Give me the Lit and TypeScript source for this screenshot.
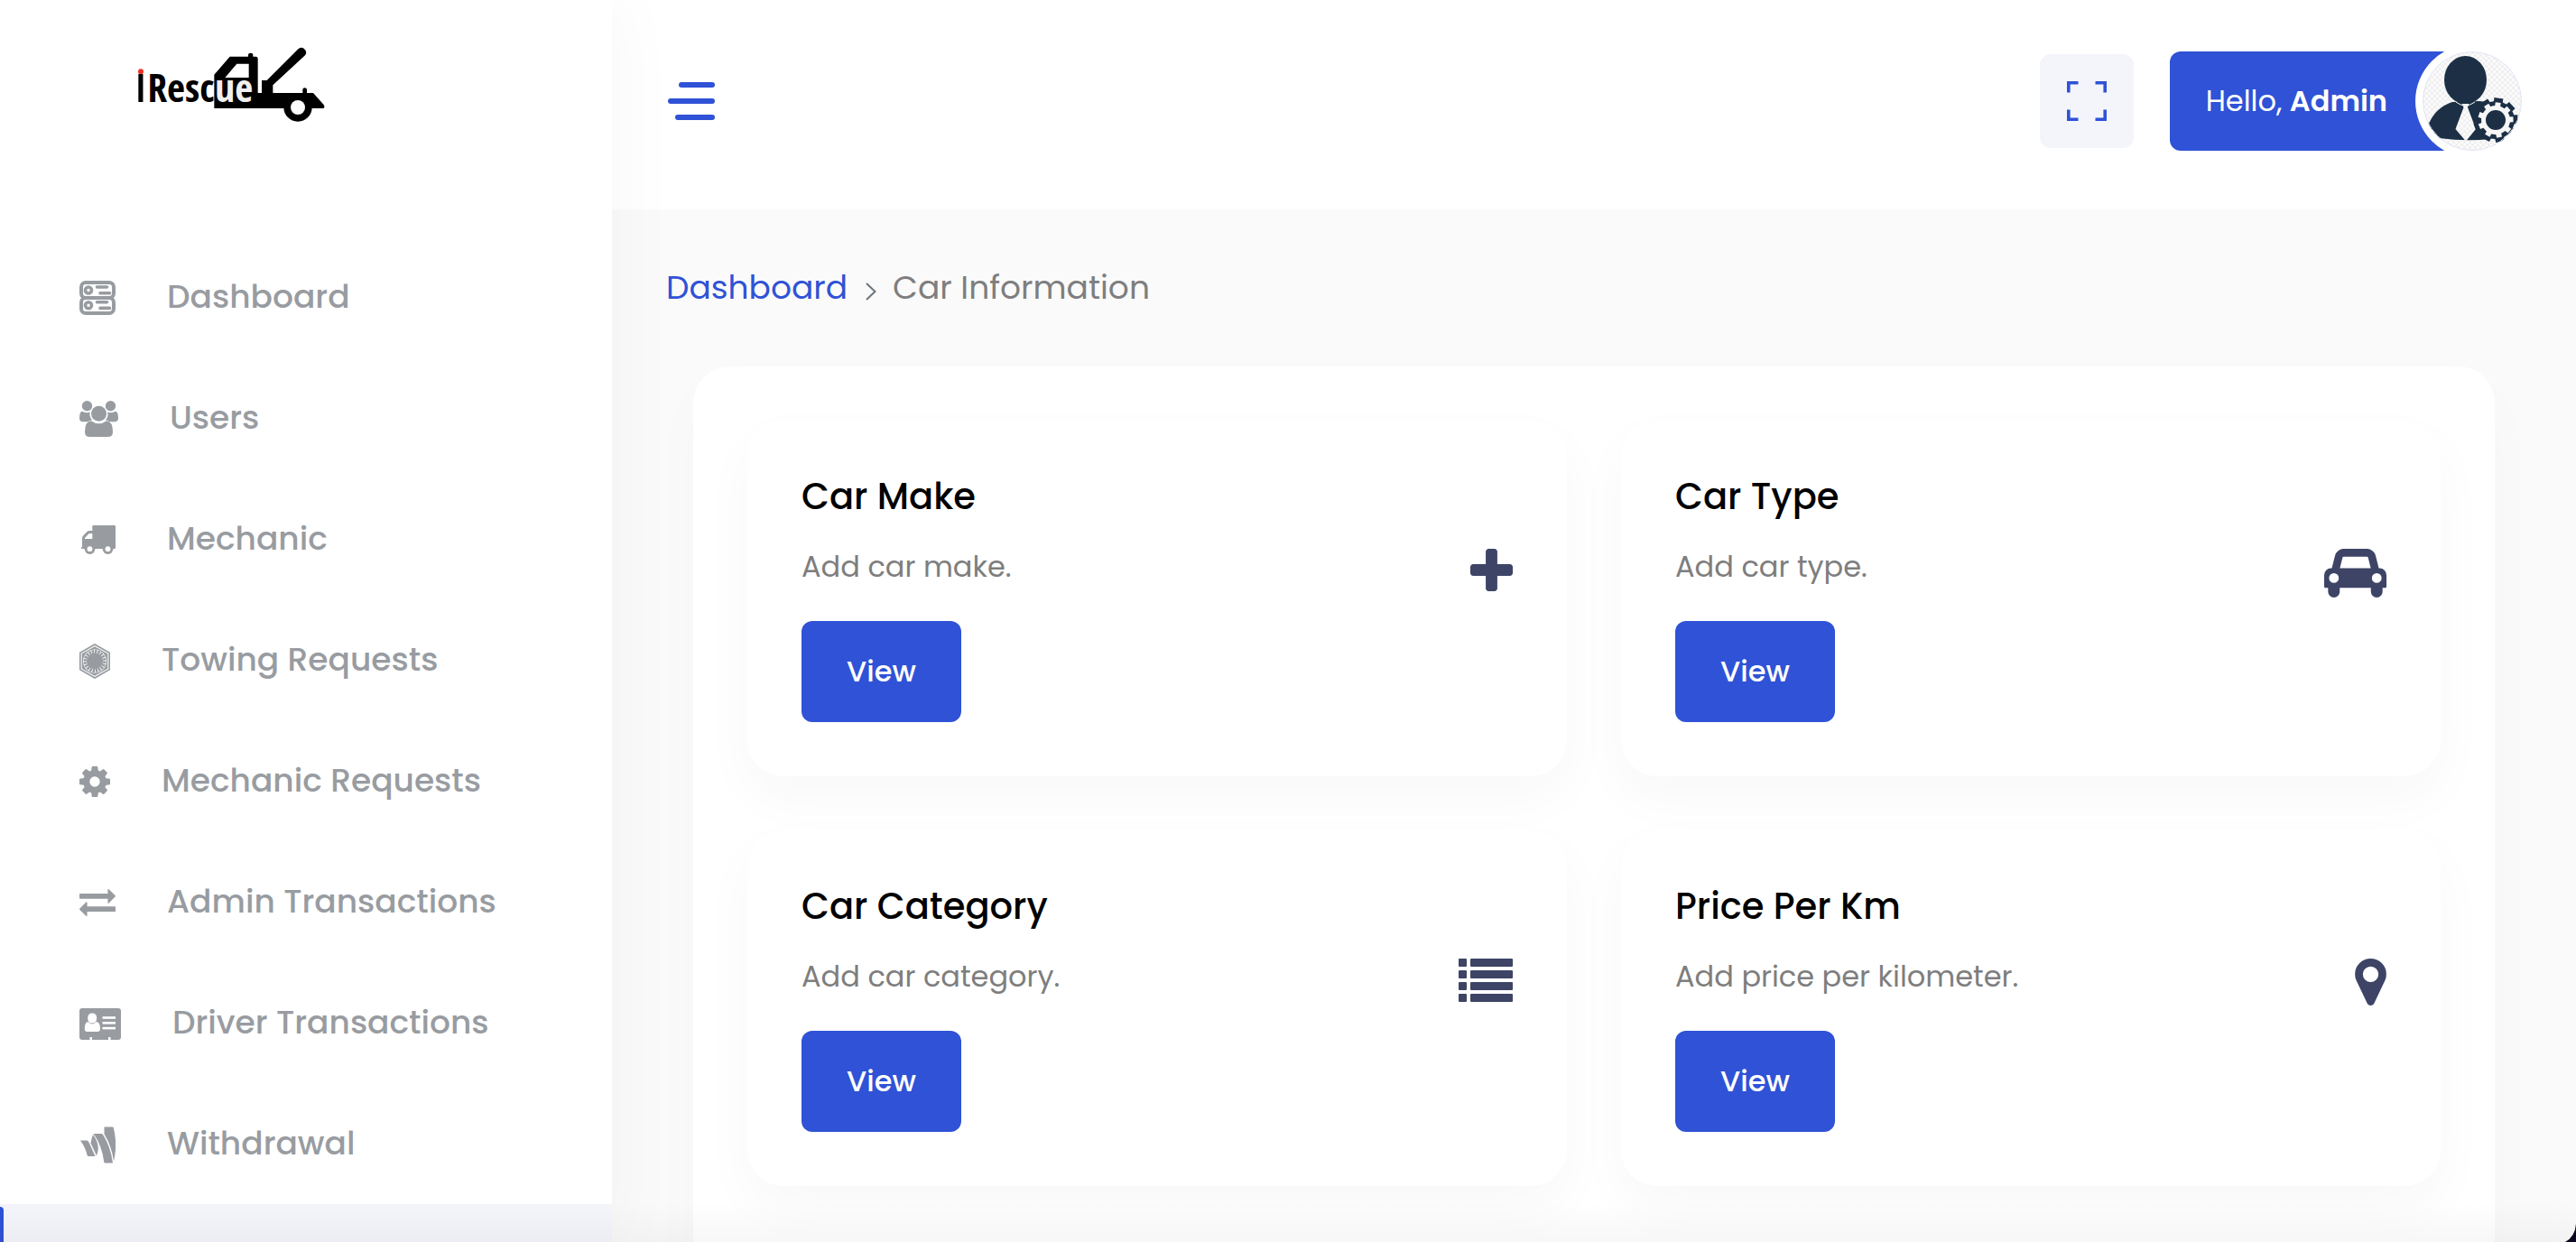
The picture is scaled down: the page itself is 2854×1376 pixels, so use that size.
import { LitElement, html, svg, css } from "lit";
import { customElement } from "lit/decorators.js";

const cogPath =
  "M1152 896q0-106-75-181t-181-75-181 75-75 181 75 181 181 75 181-75 75-181zm512-109v222q0 12-8 23t-20 13l-185 28q-19 54-39 91 35 50 107 138 10 12 10 25t-9 23q-27 37-99 108t-94 71q-12 0-26-9l-138-108q-44 23-91 38-16 136-29 186-7 28-36 28h-222q-14 0-24.5-8.5t-11.5-21.5l-28-184q-49-16-90-37l-141 107q-10 9-25 9-14 0-25-11-126-114-165-168-7-10-7-23 0-12 8-23 15-21 51-66.5t54-70.5q-27-50-41-99l-183-27q-13-2-21-12.5t-8-23.5v-222q0-12 8-23t19-13l186-28q14-46 39-92-40-57-107-138-10-12-10-24 0-10 9-23 26-36 98.5-107.5t94.5-71.5q13 0 26 10l138 107q44-23 91-38 16-136 29-186 7-28 36-28h222q14 0 24.5 8.5t11.5 21.5l28 184q49 16 90 37l142-107q9-9 24-9 13 0 25 10 129 119 165 170 7 8 7 22 0 12-8 23-15 21-51 66.5t-54 70.5q26 50 41 98l183 28q13 2 21 12.5t8 23.5z";

interface Icon {
  width: number;
  height: number;
  viewBox: string;
  art: unknown;
}

const icon = (width: number, height: number, art: unknown, viewBox = `0 0 ${width} ${height}`): Icon => ({
  width,
  height,
  viewBox,
  art,
});

const drawIcon = (i: Icon) => html`<svg
  class="glyph"
  width=${i.width}
  height=${i.height}
  viewBox=${i.viewBox}
  fill="currentColor"
  aria-hidden="true"
>${i.art}</svg>`;

const navItems: { label: string; icon: Icon }[] = [
  {
    label: "Dashboard",
    icon: icon(40, 38, svg`
      <g fill="none" stroke="currentColor">
        <rect x="2" y="2" width="36" height="17" rx="5" stroke-width="4"/>
        <rect x="2" y="19" width="36" height="17" rx="5" stroke-width="4"/>
        <circle cx="10" cy="10.5" r="3.5" stroke-width="3.6"/>
        <circle cx="10" cy="27.2" r="3.5" stroke-width="3.6"/>
        <path d="M19.5 7H30.5M23 13.8H33.5M19.5 23.8H30.5M23 30.4H33.5" stroke-width="3.6" stroke-linecap="round"/>
      </g>`),
  },
  {
    label: "Users",
    icon: icon(43, 40, svg`
      <circle cx="8.5" cy="5.8" r="5.7"/><circle cx="34.5" cy="5.8" r="5.7"/>
      <circle cx="21.5" cy="14.2" r="8.5"/>
      <path d="M3 11.8Q7 14 11.8 12.6Q10.5 18 14 21.2Q11.5 21.5 9.5 23.2H4Q0 23 0 19.5Q0 12 3 11.8Z"/>
      <path d="M40 11.8Q36 14 31.2 12.6Q32.5 18 29 21.2Q31.5 21.5 33.5 23.2H39Q43 23 43 19.5Q43 12 40 11.8Z"/>
      <path d="M13 22.2Q21.5 28.5 30 22.2Q37 22.8 37 34.5Q37 40 31.5 40H11.5Q6 40 6 34.5Q6 22.8 13 22.2Z"/>`),
  },
  {
    label: "Mechanic",
    icon: icon(40, 32, svg`
      <path fill-rule="evenodd" d="M15.5 0H38.8Q40 0 40 1.2V24.8Q40 26 38.8 26H2.8Q1.8 26 1.8 25T3 24V14.5Q3 12.5 4.3 11.2L8.5 7Q9.8 6 11.5 6H14.3V1.2Q14.3 0 15.5 0ZM6 15H14.3V9H11.5Q10.8 9 10.2 9.5L6.6 13.2Q6 13.8 6 14.5Z"/>
      <circle cx="11.5" cy="26.2" r="5.8"/><circle cx="31.5" cy="26.2" r="5.8"/>
      <g class="knockout"><circle cx="11.5" cy="26.2" r="2.9"/><circle cx="31.5" cy="26.2" r="2.9"/></g>`),
  },
  {
    label: "Towing Requests",
    icon: icon(34, 39, svg`
      <path d="M17 .9L33.2 10.2V28.8L17 38.1L.8 28.8V10.2Z" fill="none" stroke="currentColor" stroke-width="1.7"/>
      <path d="M17 3.2L31.3 11.3V27.7L17 35.8L2.7 27.7V11.3Z"/>
      <circle class="knockout" cx="17" cy="19.5" r="13"/>
      <circle cx="17" cy="19.5" r="9"/>
      <circle cx="17" cy="19.5" r="10.5" fill="none" stroke="currentColor" stroke-width="4" pathLength="80" stroke-dasharray="3 1"/>`),
  },
  {
    label: "Mechanic Requests",
    icon: icon(34, 34, svg`<path d=${cogPath}/>`, "128 128 1536 1536"),
  },
  {
    label: "Admin Transactions",
    icon: icon(40, 30, svg`<path d="M1792 1184v192q0 13-9.5 22.5t-22.5 9.5h-1376v192q0 13-9.5 22.5t-22.5 9.5q-12 0-24-10l-319-320q-9-9-9-22 0-14 9-23l320-320q9-9 23-9 13 0 22.5 9.5t9.5 22.5v192h1376q13 0 22.5 9.5t9.5 22.5zm0-544q0 14-9 23l-320 320q-9 9-23 9-13 0-22.5-9.5t-9.5-22.5v-192h-1376q-13 0-22.5-9.5t-9.5-22.5v-192q0-13 9.5-22.5t22.5-9.5h1376v-192q0-14 9-23t23-9q12 0 24 10l319 319q9 9 9 23z"/>`, "0 288 1792 1344"),
  },
  {
    label: "Driver Transactions",
    icon: icon(46, 35, svg`
      <path d="M3 0H43Q46 0 46 3V32Q46 35 43 35H34.5V32H32V35H14V32H11.5V35H3Q0 35 0 32V3Q0 0 3 0Z"/>
      <g class="knockout">
        <path d="M14.2 5.5Q19.2 5.5 19.2 11T14.2 16.5T9.2 11T14.2 5.5Z"/>
        <path d="M9.5 15Q14.2 19.8 19 15Q23 15.5 23 22.5Q23 26 20 26H8.5Q5.8 26 5.8 22.5Q5.8 15.5 9.5 15Z"/>
        <rect x="25.5" y="9.2" width="14.5" height="2.6"/>
        <rect x="25.5" y="15" width="14.5" height="2.6"/>
        <rect x="25.5" y="20.8" width="14.5" height="2.6"/>
      </g>`),
  },
  {
    label: "Withdrawal",
    icon: icon(40, 41, svg`
      <path d="M1 15.5H8Q9.5 15.5 10.5 17.5L17.5 33H10Q9 33 8.7 32Q6.5 23 1 15.5Z"/>
      <path d="M15 9Q24 21 19 32.5L12.5 18.5Q13.2 13 15 9Z"/>
      <path d="M15.5 8H24Q25.5 8 26.2 9.2Q34.5 22 37 40.5H28.5Q27.5 40.5 27.3 39.5Q25 21 15.5 8Z"/>
      <path d="M27.5 .5H36.5Q37.5 .5 37.8 1.5Q42.5 20 38 38.5Q35.5 21 27.5 8.5Z"/>`),
  },
];

const cards: { title: string; text: string; icon: Icon }[] = [
  {
    title: "Car Make",
    text: "Add car make.",
    icon: icon(47, 47, svg`<path d="M1600 736v192q0 40-28 68t-68 28h-416v416q0 40-28 68t-68 28h-192q-40 0-68-28t-28-68v-416h-416q-40 0-68-28t-28-68v-192q0-40 28-68t68-28h416v-416q0-40 28-68t68-28h192q40 0 68 28t28 68v416h416q40 0 68 28t28 68z"/>`, "192 128 1408 1408"),
  },
  {
    title: "Car Type",
    text: "Add car type.",
    icon: icon(69, 54, svg`<path d="M480 1088q0-66-47-113t-113-47-113 47-47 113 47 113 113 47 113-47 47-113zm36-320h1016l-89-357q-2-8-14-17.5t-21-9.5h-768q-9 0-21 9.5t-14 17.5zm1372 320q0-66-47-113t-113-47-113 47-47 113 47 113 113 47 113-47 47-113zm160-96v384q0 14-9 23t-23 9h-96v128q0 80-56 136t-136 56-136-56-56-136v-128h-1024v128q0 80-56 136t-136 56-136-56-56-136v-128h-96q-14 0-23-9t-9-23v-384q0-93 65.5-158.5t158.5-65.5h28l105-419q23-94 104-157.5t179-63.5h768q98 0 179 63.5t104 157.5l105 419h28q93 0 158.5 65.5t65.5 158.5z"/>`, "0 128 2048 1600"),
  },
  {
    title: "Car Category",
    text: "Add car category.",
    icon: icon(60, 48, svg`${[0, 13, 26, 39].map(
      (y) => svg`<rect x="0" y=${y} width="9" height="9" rx="1"/><rect x="13" y=${y} width="47" height="9" rx="1"/>`,
    )}`),
  },
  {
    title: "Price Per Km",
    text: "Add price per kilometer.",
    icon: icon(35, 52, svg`<path d="M1152 640q0-106-75-181t-181-75-181 75-75 181 75 181 181 75 181-75 75-181zm256 0q0 109-33 179l-364 774q-16 33-47.5 52t-67.5 19-67.5-19-46.5-52l-365-774q-33-70-33-179 0-212 150-362t362-150 362 150 150 362z"/>`, "384 128 1024 1536"),
  },
];

const teeth = Array.from({ length: 9 }, (_, i) => i * 40);

const avatar = html`<svg class="avatar" viewBox="0 0 110 110" role="img" aria-label="Admin avatar">
  <defs>
    <pattern id="check" width="6" height="6" patternUnits="userSpaceOnUse">
      <rect width="6" height="6" fill="#fbfbfb" />
      <path d="M0 0H3V3H0ZM3 3H6V6H3Z" fill="#f0f0f0" />
    </pattern>
    <clipPath id="disc"><circle cx="55" cy="55" r="55" /></clipPath>
  </defs>
  <g clip-path="url(#disc)" fill="#1c2f45">
    <rect width="110" height="110" fill="url(#check)" />
    <path d="M33 56Q14 62 6 82L18 96Q48 100 75 97L82 60Q76 56 63 55Z" />
    <ellipse cx="47.5" cy="31.5" rx="23.5" ry="26.5" />
    <path d="M37 56Q47 64 58 56" fill="none" stroke="#f6f6f6" stroke-width="1" />
    <path d="M43.5 58H51.5L50 62L59 86L48 99.5L36.5 86L45.5 62Z" fill="url(#check)" />
    <circle cx="81" cy="76" r="21" />
    ${teeth.map((a) => svg`<rect x="76" y="51.5" width="10" height="8" transform="rotate(${a + 8} 81 76)"/>`)}
    <g fill="#f6f6f6">
      <circle cx="81" cy="76" r="16" />
      ${teeth.map((a) => svg`<rect x="78" y="56.5" width="6" height="6" transform="rotate(${a + 8} 81 76)"/>`)}
    </g>
    <circle cx="81" cy="76" r="11" />
  </g>
  <circle cx="55" cy="55" r="54.5" fill="none" stroke="#dfe3f5" />
</svg>`;

const logo = html`<svg class="logo-art" viewBox="0 0 840 360" role="img" aria-label="iRescue">
  <path
    fill-rule="evenodd"
    d="M352 158L404 98H465V92Q465 86 473 86T481 92V98H490Q497 98 497 105V219H510V177H527L632 72Q644 64 653 74T654 94L547 193V219H646V208Q646 202 653 202T660 208V219H681L716 258Q722 270 712 270H352ZM388 168H467V122H427Z"
  />
  <circle cx="630" cy="267" r="47" />
  <circle cx="630" cy="267" r="24" fill="#fff" />
  <text class="logo-i" x="108" y="250" text-anchor="middle">ı</text>
  <circle cx="108" cy="148" r="9" fill="#ee3124" />
  <text class="logo-word" x="352" y="250" text-anchor="end">Resc</text>
  <text class="logo-word" x="355" y="250" fill="#f1eff0">ue</text>
</svg>`;

@customElement("app-root")
export class AppRoot extends LitElement {
  static styles = css`
    :host {
      display: block;
      --blue: #2f52d6;
      --muted: #989ca1;
      font-family: Poppins, Inter, "Open Sans", sans-serif;
      color: #7e7e7e;
    }
    * {
      box-sizing: border-box;
    }
    a {
      color: inherit;
      text-decoration: none;
    }
    button {
      font: inherit;
      border: 0;
      padding: 0;
      background: none;
      cursor: pointer;
    }
    svg {
      display: block;
      flex: none;
    }
    .shell {
      position: relative;
      display: grid;
      grid-template-columns: 678px minmax(0, 1fr);
      height: 100vh;
      overflow: hidden;
      background: #fafafa;
    }
    .sidebar {
      position: relative;
      z-index: 1;
      background: #fff;
      box-shadow: 0 0 80px rgba(0, 0, 0, 0.04);
      min-height: 0;
    }
    .logo {
      display: block;
      padding: 30px 120px 0;
      height: 262px;
    }
    .logo-art {
      width: 280px;
      height: 120px;
    }
    .logo-word {
      font: 700 130px "Liberation Sans Narrow", "Open Sans Condensed", "Liberation Sans", sans-serif;
    }
    .logo-i {
      font: 400 176px "Liberation Sans Narrow", "Liberation Sans", sans-serif;
    }
    .menu {
      list-style: none;
      margin: 0;
      padding: 0;
      display: flex;
      flex-direction: column;
      gap: 2px;
    }
    .menu-link {
      display: flex;
      align-items: center;
      gap: 57px;
      height: 132px;
      padding-left: 88px;
      color: var(--muted);
      font-size: 36px;
      font-weight: 500;
      white-space: nowrap;
    }
    .menu-link .glyph {
      margin-top: 4px;
    }
    .menu-link.active {
      padding: 0;
      background: #f4f5fb;
      align-items: stretch;
    }
    .menu-link.active::before {
      content: "";
      width: 4px;
      margin-top: 3px;
      background: var(--blue);
      border-radius: 0 10px 10px 0;
    }
    .knockout {
      fill: #fff;
    }
    .main {
      display: flex;
      flex-direction: column;
      min-width: 0;
      min-height: 0;
    }
    .header {
      flex: none;
      display: flex;
      align-items: center;
      gap: 40px;
      height: 232px;
      padding: 0 60px 8px 62px;
      background: #fff;
    }
    .burger {
      display: flex;
      flex-direction: column;
      align-items: flex-end;
      gap: 12px;
      width: 52px;
      margin-right: auto;
    }
    .bar {
      width: 40px;
      height: 6px;
      border-radius: 3px;
      background: var(--blue);
    }
    .bar.long {
      width: 52px;
    }
    .bar.mid {
      width: 44px;
    }
    .expand {
      display: grid;
      place-items: center;
      width: 104px;
      height: 104px;
      border-radius: 12px;
      background: #f4f5fb;
      color: var(--blue);
    }
    .profile {
      display: flex;
      align-items: center;
      color: #fff;
      font-size: 32px;
      white-space: nowrap;
    }
    .greeting {
      padding: 0 95px 0 40px;
      line-height: 110px;
      border-radius: 12px 0 0 12px;
      background: var(--blue);
    }
    .greeting strong {
      font-weight: 600;
    }
    .avatar {
      width: 110px;
      height: 110px;
      margin-left: -56px;
      border-radius: 50%;
      background: #fff;
      box-shadow: 0 0 0 8px #fff;
      clip-path: inset(0 -8px);
    }
    .content {
      flex: 1;
      min-height: 0;
      display: flex;
      flex-direction: column;
      gap: 60px;
      padding-top: 60px;
    }
    .crumbs {
      display: flex;
      align-items: center;
      padding-left: 60px;
      font-size: 36px;
      line-height: 54px;
    }
    .crumbs a {
      color: var(--blue);
    }
    .crumbs svg {
      margin: 8px 18px 0 20px;
    }
    .panel {
      flex: 1 0 auto;
      display: grid;
      grid-template-columns: repeat(2, minmax(0, 1fr));
      align-content: start;
      gap: 60px;
      margin: 0 90px;
      padding: 60px;
      padding-bottom: 120px;
      border-radius: 40px;
      background: #fff;
      box-shadow: 0 24px 70px rgba(0, 0, 0, 0.02);
    }
    .card {
      display: flex;
      justify-content: space-between;
      padding: 60px;
      border-radius: 40px;
      background: #fff;
      box-shadow: 0 24px 60px rgba(0, 0, 0, 0.03);
      color: #3d4465;
    }
    .card > .glyph {
      margin-top: 82px;
    }
    .card-title {
      margin: 0 0 30px;
      font-size: 40px;
      line-height: 48px;
      font-weight: 500;
      color: #000;
    }
    .card-text {
      margin: 0 0 36px;
      font-size: 32px;
      line-height: 48px;
      color: #7e7e7e;
    }
    .view {
      display: block;
      height: 112px;
      padding: 0 50px;
      border-radius: 12px;
      background: var(--blue);
      color: #fff;
      font-size: 32px;
      font-weight: 500;
    }
    .fade {
      position: absolute;
      z-index: 2;
      inset: auto 0 0 0;
      height: 44px;
      background: linear-gradient(rgba(0, 0, 0, 0), rgba(0, 0, 0, 0.03));
      pointer-events: none;
    }
    .corner {
      position: absolute;
      z-index: 3;
      right: 0;
      bottom: 0;
    }
  `;

  render() {
    return html`
      <div class="shell">
        <aside class="sidebar">
          <a class="logo" href="#">${logo}</a>
          <nav aria-label="Main">
            <ul class="menu">
              ${navItems.map(
                (n) => html`<li><a class="menu-link" href="#">${drawIcon(n.icon)}<span>${n.label}</span></a></li>`,
              )}
              <li><a class="menu-link active" href="#" aria-current="page"></a></li>
            </ul>
          </nav>
        </aside>
        <div class="main">
          <header class="header">
            <button class="burger" type="button" aria-label="Toggle menu">
              <span class="bar"></span><span class="bar long"></span><span class="bar mid"></span>
            </button>
            <button class="expand" type="button" aria-label="Full screen">
              <svg width="44" height="44" viewBox="0 0 44 44" fill="none" stroke="currentColor" stroke-width="3.6">
                <path d="M1.8 12.5V1.8H12.5M31.5 1.8H42.2V12.5M42.2 31.5V42.2H31.5M12.5 42.2H1.8V31.5" />
              </svg>
            </button>
            <button class="profile" type="button">
              <span class="greeting">Hello, <strong>Admin</strong></span>
              ${avatar}
            </button>
          </header>
          <main class="content">
            <nav class="crumbs" aria-label="Breadcrumb">
              <a href="#">Dashboard</a>
              <svg width="12" height="20" viewBox="0 0 12 20" fill="none" stroke="#6c757d" stroke-width="2">
                <path d="M1 1L10.5 10L1 19" />
              </svg>
              <span>Car Information</span>
            </nav>
            <section class="panel">
              ${cards.map(
                (c) => html`<article class="card">
                  <div>
                    <h2 class="card-title">${c.title}</h2>
                    <p class="card-text">${c.text}</p>
                    <button class="view" type="button">View</button>
                  </div>
                  ${drawIcon(c.icon)}
                </article>`,
              )}
            </section>
          </main>
        </div>
        <div class="fade"></div>
        <svg class="corner" width="12" height="20" viewBox="0 0 12 20" aria-hidden="true">
          <path d="M12 0Q11 14 0 20H12Z" fill="#0b0720" />
        </svg>
      </div>
    `;
  }
}
